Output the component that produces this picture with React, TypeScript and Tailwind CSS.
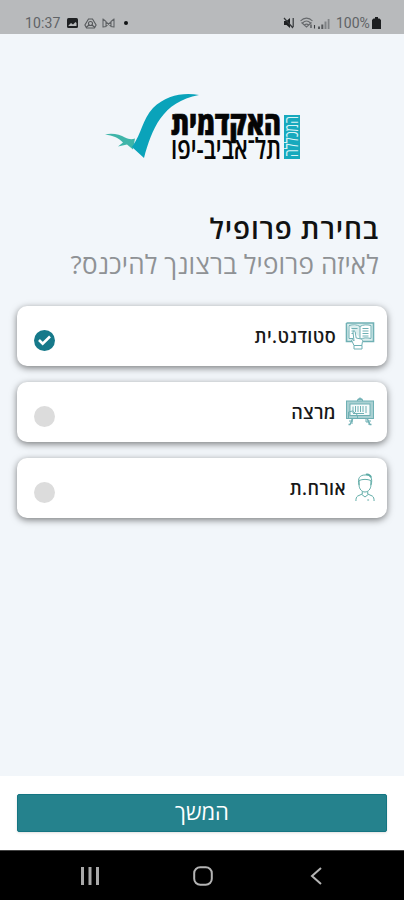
import { useState } from 'react'

const PROFILES = [
  { id: 'student', label: 'סטודנט.ית', Icon: StudentIcon },
  { id: 'lecturer', label: 'מרצה', Icon: LecturerIcon },
  { id: 'guest', label: 'אורח.ת', Icon: GuestIcon },
]

function StatusBar() {
  return (
    <div dir="ltr" className="h-[34px] shrink-0 bg-[#b8babc] pt-[12px] pl-[25px] pr-[23px] flex items-center justify-between font-[Roboto] text-[14px] text-[#606366]">
      <div className="flex items-center">
        <span className="w-[36px] tracking-[0.1px]">10:37</span>
        <svg className="ml-[6px]" width="11" height="10" viewBox="0 0 11 10">
          <rect width="11" height="10" rx="1.5" fill="#1f2123" />
          <path d="M1.5 7.5 4 5l2 1.5L8.5 4l1 1v3h-8z" fill="#b8babc" />
        </svg>
        <svg className="ml-[6px]" width="13" height="11" viewBox="0 0 13 11" fill="none" stroke="#55585b" strokeWidth="1.1">
          <path d="M4.5 1h4l3.6 6-1.7 3H2.6L.9 7z" />
          <circle cx="6.5" cy="5.5" r="2" />
          <path d="M2 9.5 5 7M11 9.5 8 7" />
        </svg>
        <svg className="ml-[5px]" width="13" height="10" viewBox="0 0 13 10" fill="none" stroke="#606366" strokeWidth="1.1">
          <path d="M1 .5v9M12 .5v9M1 1l3 2.5v5L1 9M12 1 9 3.5v5L12 9M4 4l5 4M9 4 4 8" />
        </svg>
        <span className="ml-[9px] size-[4px] rounded-full bg-[#101214]" />
      </div>
      <div className="flex items-center">
        <svg width="12" height="12" viewBox="0 0 12 12">
          <path d="M1 4h2.5L7 1v10L3.5 8H1z" fill="#1f2123" />
          <path d="M1 1l9 10M10.2 1v9" stroke="#34373a" strokeWidth="1.2" fill="none" />
        </svg>
        <svg className="ml-[5px]" width="17" height="12" viewBox="0 0 17 12" fill="none" stroke="#66696c" strokeWidth="1.1">
          <path d="M.5 4C4 .2 9 .2 12.5 4M1.5 5.5 6.5 10l5-4.500M2.500 6C5 3.500 8 3.500 10.500 6M4.500 8c1.400-1.200 2.800-1.200 4 0" />
          <path d="M11 7.500V11M14.500 11.500V8" stroke="#3a3d40" />
        </svg>
        <svg className="ml-[1px]" width="12" height="11" viewBox="0 0 12 11">
          <path d="M0 8.500h2V11H0zM3.300 6.500h2V11h-2z" fill="#55585b" />
          <path d="M6.500 3.500h2V11h-2zM9.700 1h1.800v10H9.700z" fill="#808386" />
        </svg>
        <span className="ml-[6px] w-[35px]">100%</span>
        <svg className="ml-[1px]" width="9" height="12" viewBox="0 0 9 12">
          <path d="M3 0h3v1.500h1.500L9 3v9H0V3l1.500-1.500H3z" fill="#1c1e20" />
        </svg>
      </div>
    </div>
  )
}

function Logo() {
  return (
    <svg className="mx-auto block overflow-visible" width="204" height="84" viewBox="0 0 204 84" direction="rtl">
      <path d="M5 43.500c7-2 15 0 20 3 4 2 7 2 10 1l-2 11-6-5c-3 1-6 1-9 2l5-4c-5-5-10-7-18-8z" fill="#3fb5a9" />
      <path d="M99 4C84 1 66 4 53 17 42 29 42 42 32 56l12 11C52 38 62 11 99 4z" fill="#0aa3ba" />
      <g fill="#050505" stroke="#050505" fontFamily="Open Sans, sans-serif">
        <text x="181" y="44" fontSize="32" fontWeight="800" strokeWidth="0.7" textLength="110" lengthAdjust="spacingAndGlyphs">האקדמית</text>
        <text x="181" y="67.500" fontSize="29" fontWeight="600" strokeWidth="0.100" textLength="110" lengthAdjust="spacingAndGlyphs">תל־אביב-יפו</text>
      </g>
      <rect x="184" y="24" width="16" height="44" fill="#17a9bd" />
      <text transform="translate(197.500 67) rotate(-90)" x="42" y="0" fontSize="18" fontWeight="500" fontFamily="Open Sans, sans-serif" fill="#d9f3f5" textLength="41" lengthAdjust="spacingAndGlyphs">המכללה</text>
    </svg>
  )
}

function StudentIcon() {
  return (
    <svg width="30" height="30" viewBox="0 0 30 30" fill="none" stroke="#6fb0b4" strokeWidth="1">
      <path d="M1.500 2h27v18.500H18M1.500 2v18.500H7" fill="#dceeee" strokeWidth="1.600" />
      <path d="M4 4.500c4-1 8-1 11 1 3-2 7-2 11-1v13c-4-1-8-1-11 1V5.500M4 4.500v13h4" fill="#fff" />
      <path d="M6.500 7.500h6M6.500 10h3M6.500 12.500h2M17.500 7.500h6M17.500 10h6M17.500 12.500h6M17.500 15h6" />
      <path d="M9 24.500 6.500 19c1-1 2 0 2.500 1l-1-9c.5-1.500 2-1 2.200 0l1 6 5 1c1.200.4 1.500 1.300 1.300 2.500l-.7 4zM9 24.500h8v3.500H9z" fill="#fff" />
    </svg>
  )
}

function LecturerIcon() {
  return (
    <svg width="30" height="30" viewBox="0 0 30 30" fill="none" stroke="#6fb0b4" strokeWidth="1">
      <path d="M15 .5v3M12.500 4c0-3 5-3 5 0M8 21l-3 6.500H3.500M22 21l3 6.500h1.500" strokeWidth="1.300" />
      <rect x="1.500" y="4" width="27" height="17.500" fill="#a9d0d2" />
      <rect x="5" y="7" width="20" height="11.500" fill="#f6fbfb" />
      <path d="M8 16V9.500M10.500 9v6M13 9v6M15.500 9v6M18 9v6M21 9v7M8 16.500h11M3.500 21v-6l4-1 5 4v3M7 21v6M21 22v3h3v3" />
      <path d="M4 24h4M22 24h4" />
    </svg>
  )
}

function GuestIcon() {
  return (
    <svg width="20" height="30" viewBox="0 0 22 30" preserveAspectRatio="none" fill="none" stroke="#5aa9a4" strokeWidth="1">
      <path d="M4.500 12C2.500 5 5.500 2 11 2c6-1 9 4 6.500 10" />
      <path d="M4.500 7.500c4-1.500 9-1.500 13 0v4.500c0 4-3 7-6.500 7s-6.500-3-6.500-7z" />
      <path d="M12 1.500c3-.5 5 1 6 3" strokeWidth="1.600" />
      <path d="M8 18.500v2.500L3 23c-1.500 1-2 2.500-2 5M14 18.500v2.500l5 2c1.500 1 2 2.500 2 5M7.500 21.500 11 24l3.500-2.500" />
      <path d="M13.500 27h2" />
    </svg>
  )
}

function Radio({ checked }: { checked: boolean }) {
  if (!checked) return <span className="block size-[21px] rounded-full bg-[#dcdcdc]" />
  return (
    <span className="size-[21px] rounded-full bg-[#16798a] flex items-center justify-center">
      <svg width="15" height="12" viewBox="0 0 15 12" fill="none" stroke="#fff" strokeWidth="2.6">
        <path d="M2 6 5.700 9.700 13 2.500" />
      </svg>
    </span>
  )
}

function NavBar() {
  return (
    <div dir="ltr" className="h-[50px] shrink-0 bg-black border-t border-[#444] pl-[81px] pr-[82px] flex items-center">
      <svg width="18" height="18" viewBox="0 0 18 18" fill="#a9a9a9">
        <path d="M0 0h3v18H0zM7.500 0h3v18h-3zM15 0h3v18h-3z" />
      </svg>
      <svg className="ml-[94px]" width="20" height="20" viewBox="0 0 20 20" fill="none" stroke="#b4b4b4" strokeWidth="2">
        <rect x="1.200" y="1.200" width="17.600" height="17.600" rx="6" />
      </svg>
      <svg className="ml-auto" width="12" height="18" viewBox="0 0 12 18" fill="none" stroke="#b4b4b4" strokeWidth="2">
        <path d="M11 1 2 9l9 8" />
      </svg>
    </div>
  )
}

export default function App() {
  const [selected, setSelected] = useState('student')

  return (
    <div dir="rtl" className="w-[404px] h-[900px] flex flex-col overflow-hidden bg-[#f2f6fa] font-['Open_Sans',sans-serif]">
      <StatusBar />
      <main className="flex-1 px-[17px] pt-[57px]">
        <Logo />
        <div className="px-[8px] mt-[33px]">
          <h1 className="text-[28px] leading-[40px] tracking-[0.85px] font-semibold text-[#111] whitespace-nowrap">בחירת פרופיל</h1>
          <p className="text-[26px] leading-[32px] tracking-[0.15px] text-[#8f9295] whitespace-nowrap">לאיזה פרופיל ברצונך להיכנס?</p>
        </div>
        <div className="mt-[26px] flex flex-col gap-[16px]">
          {PROFILES.map(({ id, label, Icon }) => (
            <button
              key={id}
              onClick={() => setSelected(id)}
              className="h-[60px] pr-[12px] pl-[17px] rounded-[10px] bg-white flex items-center justify-between shadow-[0_2px_7px_rgba(0,0,0,0.5)]"
            >
              <span className="flex items-center gap-[9px]">
                <Icon />
                <span className="text-[18px] tracking-[0.4px] font-semibold text-[#181818] whitespace-nowrap">{label}</span>
              </span>
              <span className="pt-[8px]">
                <Radio checked={selected === id} />
              </span>
            </button>
          ))}
        </div>
      </main>
      <footer className="h-[74px] shrink-0 bg-white px-[17px] pt-[18px]">
        <button className="w-full h-[38px] pb-[3px] rounded-[2px] bg-[#25828d] border border-[#147582] text-white text-[22px] leading-[33px] shadow-sm">
          המשך
        </button>
      </footer>
      <NavBar />
    </div>
  )
}
